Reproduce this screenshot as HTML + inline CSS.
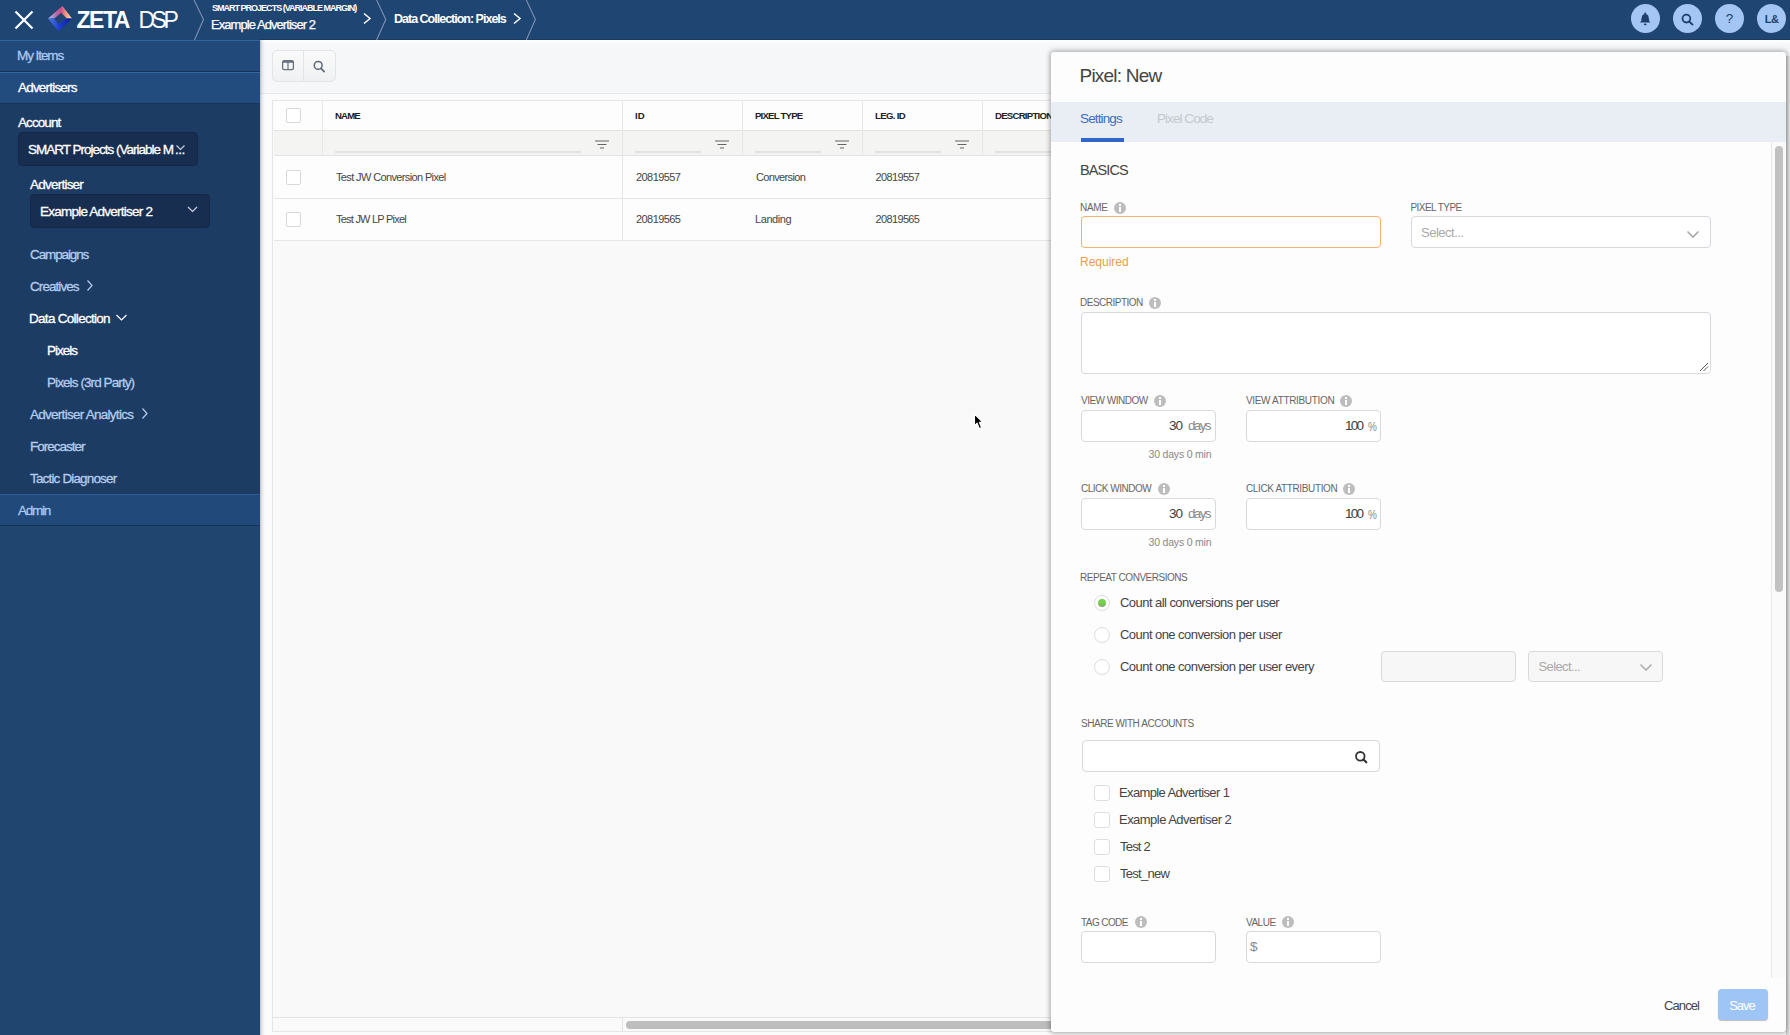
<!DOCTYPE html>
<html><head><meta charset="utf-8">
<style>
*{box-sizing:border-box;margin:0;padding:0}
html,body{width:1790px;height:1035px;overflow:hidden}
body{position:relative;font-family:"Liberation Sans",sans-serif;background:#f7f7f6;color:#444}
.a{position:absolute;white-space:nowrap}
/* header */
#hdr{left:0;top:0;width:1790px;height:40px;background:#1f4572}
.hbtn{position:absolute;top:4px;width:29px;height:29px;border-radius:50%;background:#a4c6f4}
/* sidebar */
#side{left:0;top:40px;width:260px;height:995px;background:#1f436e}
.sit{position:absolute;font-size:13.5px;color:#b3ccee;line-height:16px;-webkit-text-stroke:0.3px currentColor}
/* content */
#content{left:260px;top:40px;width:1530px;height:995px;background:#f7f7f6}
.lbl{position:absolute;font-size:10px;color:#666;line-height:12px;letter-spacing:0px}
.inp{position:absolute;border:1px solid #d6d9de;border-radius:4px;background:#fff}
.info{position:absolute;width:12px;height:12px;border-radius:50%;background:#bdbdbd}
.info:after{content:"";position:absolute;left:5px;top:5px;width:2px;height:5px;background:#fff}
.info:before{content:"";position:absolute;left:5px;top:2px;width:2px;height:2px;background:#fff}
.thd{font-size:9.6px;line-height:12px;font-weight:bold;color:#222}
.td{font-size:11px;line-height:14px;color:#454545}
.ph{font-size:13px;line-height:16px;color:#a9a9a9}
.num{font-size:13.5px;line-height:16px;color:#3d3d3d}
.unit{font-size:13.5px;line-height:16px;color:#888}
.sub{font-size:10.5px;line-height:13px;color:#888}
.rt{font-size:13px;line-height:16px;color:#444}
.radio{position:absolute;width:16px;height:16px;border:1px solid #ddd;border-radius:50%;background:#fff}
.cb{position:absolute;width:16px;height:16px;border:1px solid #ddd;border-radius:3px;background:#fff}
</style></head><body>

<div id="hdr" class="a">
 <div class="a" style="left:260px;top:39px;width:1530px;height:1px;background:#1c3b62"></div>
 <svg class="a" style="left:0;top:0" width="1790" height="40">
  <path d="M15.5 11.5 L32.5 28.5 M32.5 11.5 L15.5 28.5" stroke="#fff" stroke-width="2.2" fill="none"/>
  <defs>
   <linearGradient id="lg1" x1="0" y1="0" x2="1" y2="0"><stop offset="0" stop-color="#a9c3ee"/><stop offset=".35" stop-color="#b86aa8"/><stop offset=".55" stop-color="#cf4f86"/><stop offset=".75" stop-color="#ee9a84"/><stop offset="1" stop-color="#fbeaa0"/></linearGradient>
   <linearGradient id="lg2" x1="0" y1="0" x2="1" y2="0"><stop offset="0" stop-color="#4a7fe8"/><stop offset=".5" stop-color="#1a3bd0"/><stop offset="1" stop-color="#0a16a0"/></linearGradient>
  </defs>
  <path d="M48 18.6 L62.4 6 L72 18.6 L66.8 18.6 L61.1 12.8 L54.3 18.6 Z" fill="url(#lg1)"/>
  <path d="M48 18.6 L54.3 18.6 L58.6 24.6 L66.8 18.6 L72 18.6 L58.4 31 Z" fill="url(#lg2)"/>
  <path d="M194 0 L203.5 19.5 L194.5 40" stroke="#7d92b4" stroke-width="1.1" fill="none"/>
  <path d="M376.6 0 L385.8 19.5 L376.6 40" stroke="#7d92b4" stroke-width="1.1" fill="none"/>
  <path d="M526.3 0 L535.4 19.5 L526.3 40" stroke="#7d92b4" stroke-width="1.1" fill="none"/>
  <path d="M364 13.5 L370 18.5 L364 23.5" stroke="#fff" stroke-width="1.5" fill="none"/>
  <path d="M514 13.5 L520 18.5 L514 23.5" stroke="#fff" stroke-width="1.5" fill="none"/>
 </svg>
 <div class="a" id="t_zeta" style="left:76.5px;top:7px;font-size:23px;line-height:26px;font-weight:bold;color:#fff;letter-spacing:-1.5px">ZETA</div>
 <div class="a" id="t_dsp" style="left:138.5px;top:7px;font-size:23px;line-height:26px;color:#fff;letter-spacing:-3.5px">DSP</div>
 <div class="a" id="t_smart" style="left:212px;top:3px;font-size:9px;line-height:11px;color:#fff;font-weight:bold;letter-spacing:-0.99px">SMART PROJECTS (VARIABLE MARGIN)</div>
 <div class="a" id="t_exadv" style="left:211px;top:17px;font-size:13px;line-height:16px;color:#fff;-webkit-text-stroke:0.25px #fff;letter-spacing:-0.94px">Example Advertiser 2</div>
 <div class="a" id="t_dcp" style="left:394px;top:11px;font-size:12.5px;line-height:16px;color:#fff;font-weight:bold;letter-spacing:-1px">Data Collection: Pixels</div>
 <div class="hbtn" style="left:1631px"><svg width="29" height="29" style="position:absolute;left:0;top:0"><path d="M9 18.6 L19.4 18.6 L18.2 17 L17.6 13 C17.3 11 16 10 14.2 10 C12.4 10 11.1 11 10.8 13 L10.2 17 Z" fill="#1e3f6a"/><circle cx="14.2" cy="9.6" r="1" fill="#1e3f6a"/><ellipse cx="14.2" cy="20.3" rx="1.4" ry="0.9" fill="#1e3f6a"/></svg></div>
 <div class="hbtn" style="left:1673px"><svg width="29" height="29" style="position:absolute;left:0;top:0"><circle cx="13.4" cy="14.6" r="3.9" stroke="#1e3f6a" stroke-width="1.8" fill="none"/><path d="M16.2 17.5 L19.5 20.6" stroke="#1e3f6a" stroke-width="1.9" stroke-linecap="round"/></svg></div>
 <div class="hbtn" style="left:1715px"><div class="a" style="left:0;top:7px;width:29px;text-align:center;font-size:13.5px;line-height:16px;color:#1e3f6a">?</div></div>
 <div class="hbtn" style="left:1757px"><div class="a" style="left:0;top:8px;width:29px;text-align:center;font-size:11px;line-height:14px;color:#1e3f6a;font-weight:bold;letter-spacing:-0.5px">L&amp;</div></div>
</div>
<div id="side" class="a">
 <div class="a" style="left:0;top:0;width:260px;height:995px;background:#20456f"></div>
 <div class="a" style="left:0;top:63px;width:260px;height:391px;background:#1d3c63"></div>
 <div class="a" style="left:0;top:0;width:260px;height:31px;background:#21497a;border-top:1px solid #3465a0"></div>
 <div class="a" style="left:0;top:31px;width:260px;height:1px;background:#15325a"></div>
 <div class="a" style="left:0;top:32px;width:260px;height:32px;background:#234c7e;border-top:1px solid #3466a2;border-bottom:1px solid #17345c"></div>
 <div class="a" style="left:0;top:454px;width:260px;height:32px;background:#21497a;border-top:1px solid #2d5d98;border-bottom:1px solid #15325a"></div>
 <div class="sit" id="t_myitems" style="left:17px;top:8px;color:#a9c8f2;letter-spacing:-1.07px">My Items</div>
 <div class="sit" id="t_adv" style="left:18px;top:40px;color:#fff;letter-spacing:-0.8px">Advertisers</div>
 <div class="sit" id="t_acc" style="left:18px;top:75px;color:#fff;letter-spacing:-0.92px">Account</div>
 <div class="a" style="left:18px;top:92px;width:180px;height:34px;background:#172e50;border:1px solid #13284a;border-radius:4px"></div>
 <div class="sit" id="t_smartp" style="left:28px;top:102px;color:#fff;letter-spacing:-1px">SMART Projects (Variable M</div><div class="sit" style="left:175px;top:102px;color:#fff;letter-spacing:-0.5px">...</div>
 <div class="sit" id="t_advl" style="left:30px;top:137px;color:#fff;letter-spacing:-0.77px">Advertiser</div>
 <div class="a" style="left:30px;top:154px;width:180px;height:34px;background:#172e50;border:1px solid #13284a;border-radius:4px"></div>
 <div class="sit" id="t_exadv2" style="left:40px;top:164px;color:#fff;letter-spacing:-0.77px">Example Advertiser 2</div>
 <svg class="a" style="left:0;top:0" width="260" height="500">
  <path d="M176.5 105.5 L180.5 109.5 L184.5 105.5" stroke="#c9d3e0" stroke-width="1.1" fill="none"/>
  <path d="M188 167 L192.5 171.5 L197 167" stroke="#c9d3e0" stroke-width="1.2" fill="none"/>
  <path d="M87.5 240.5 L92 245.5 L87.5 250.5" stroke="#b3ccee" stroke-width="1.2" fill="none"/>
  <path d="M116.5 275 L121.5 280 L126.5 275" stroke="#fff" stroke-width="1.2" fill="none"/>
  <path d="M142.5 368.5 L147 373.5 L142.5 378.5" stroke="#b3ccee" stroke-width="1.2" fill="none"/>
 </svg>
 <div class="sit" id="t_camp" style="left:30px;top:207px;letter-spacing:-1.12px">Campaigns</div>
 <div class="sit" id="t_crea" style="left:30px;top:239px;letter-spacing:-0.93px">Creatives</div>
 <div class="sit" id="t_dc" style="left:29px;top:271px;color:#fff;letter-spacing:-0.71px">Data Collection</div>
 <div class="sit" id="t_pix" style="left:47px;top:303px;color:#fff;letter-spacing:-1px">Pixels</div>
 <div class="sit" id="t_pix3" style="left:47px;top:335px;letter-spacing:-0.91px">Pixels (3rd Party)</div>
 <div class="sit" id="t_aa" style="left:30px;top:367px;letter-spacing:-0.73px">Advertiser Analytics</div>
 <div class="sit" id="t_fc" style="left:30px;top:399px;letter-spacing:-1px">Forecaster</div>
 <div class="sit" id="t_td" style="left:30px;top:431px;letter-spacing:-0.84px">Tactic Diagnoser</div>
 <div class="sit" id="t_admin" style="left:18px;top:463px;color:#a9c8f2;letter-spacing:-1.25px">Admin</div>
</div>
<div id="content" class="a">
 <!-- shadow from sidebar -->
 <!-- toolbar area -->
 <div class="a" style="left:0;top:0;width:1530px;height:54px;background:#f6f7f9;border-bottom:1px solid #e6e8eb"></div>
 <div class="a" style="left:0;top:54px;width:1530px;height:941px;background:#fbfbfb"></div>
 <div class="a" style="left:0;top:0;width:1530px;height:5px;background:linear-gradient(#ffffff,#f6f7f9)"></div>
 <div class="a" style="left:0;top:0;width:5px;height:995px;background:linear-gradient(to right,rgba(0,0,0,.24),rgba(0,0,0,.08) 40%,rgba(0,0,0,0))"></div>
 <div class="a" style="left:12px;top:10px;width:64px;height:32px;border:1px solid #e2e4e8;border-radius:5px;background:linear-gradient(#fafafa,#f0f1f3)"></div>
 <div class="a" style="left:43px;top:11px;width:1px;height:30px;background:#e2e4e8"></div>
 <svg class="a" style="left:12px;top:10px" width="64" height="32">
  <rect x="10.6" y="10.6" width="10.8" height="9" rx="1.6" fill="none" stroke="#69717e" stroke-width="1.3"/>
  <path d="M10.6 11.9 L21.4 11.9" stroke="#69717e" stroke-width="1.8"/>
  <path d="M16 11 L16 19.5" stroke="#69717e" stroke-width="1.2"/>
  <circle cx="46.2" cy="15.4" r="3.9" fill="none" stroke="#5f6774" stroke-width="1.5"/>
  <path d="M49 18.4 L52.2 21.6" stroke="#5f6774" stroke-width="1.6" stroke-linecap="round"/>
 </svg>
 <!-- table -->
 <div class="a" style="left:12px;top:60px;width:1518px;height:932px;background:#f9f9f9;border:1px solid #e6e6e6;border-right:none"></div>
 <div class="a" style="left:14px;top:61px;width:1516px;height:30px;background:#fdfdfd;border-bottom:1px solid #e3e3e3"></div>
 <div class="a" style="left:14px;top:91px;width:1516px;height:25px;background:#f4f4f3;border-bottom:1px solid #e3e3e3"></div>
 <div class="a" style="left:14px;top:116px;width:1516px;height:43px;background:#fdfdfd;border-bottom:1px solid #e6e6e6"></div>
 <div class="a" style="left:14px;top:159px;width:1516px;height:42px;background:#fdfdfd;border-bottom:1px solid #e6e6e6"></div>
 <!-- column dividers -->
 <div class="a" style="left:62px;top:61px;width:1px;height:55px;background:#e6e6e6"></div>
 <div class="a" style="left:362px;top:61px;width:1px;height:140px;background:#e6e6e6"></div>
 <div class="a" style="left:482px;top:61px;width:1px;height:55px;background:#e6e6e6"></div>
 <div class="a" style="left:602px;top:61px;width:1px;height:55px;background:#e6e6e6"></div>
 <div class="a" style="left:722px;top:61px;width:1px;height:55px;background:#e6e6e6"></div>
 <!-- checkboxes -->
 <div class="a" style="left:26px;top:68px;width:15px;height:15px;border:1px solid #d8d8d8;border-radius:2px;background:#fff"></div>
 <div class="a" style="left:26px;top:130px;width:15px;height:15px;border:1px solid #d8d8d8;border-radius:2px;background:#fff"></div>
 <div class="a" style="left:26px;top:172px;width:15px;height:15px;border:1px solid #d8d8d8;border-radius:2px;background:#fff"></div>
 <!-- header text -->
 <div class="a thd" id="t_hname" style="left:75px;top:70px;letter-spacing:-0.83px">NAME</div>
 <div class="a thd" id="t_hid" style="left:375px;top:70px;letter-spacing:-0px">ID</div>
 <div class="a thd" id="t_hpt" style="left:495px;top:70px;letter-spacing:-0.78px">PIXEL TYPE</div>
 <div class="a thd" id="t_hleg" style="left:615px;top:70px;letter-spacing:-0.67px">LEG. ID</div>
 <div class="a thd" id="t_hdesc" style="left:735px;top:70px;letter-spacing:-0.75px">DESCRIPTION</div>
 <!-- filter underline + icons -->
 <div class="a" style="left:75px;top:111px;width:246px;height:2px;background:#e2e2e2"></div>
 <div class="a" style="left:375px;top:111px;width:66px;height:2px;background:#e2e2e2"></div>
 <div class="a" style="left:495px;top:111px;width:66px;height:2px;background:#e2e2e2"></div>
 <div class="a" style="left:615px;top:111px;width:66px;height:2px;background:#e2e2e2"></div>
 <div class="a" style="left:735px;top:111px;width:66px;height:2px;background:#e2e2e2"></div>
 <svg class="a" style="left:0;top:90px" width="1000" height="26">
  <g stroke="#666" stroke-width="1.2">
   <path d="M335 11 H349 M337.5 14.5 H346.5 M340 18 H344"/>
   <path d="M455 11 H469 M457.5 14.5 H466.5 M460 18 H464"/>
   <path d="M575 11 H589 M577.5 14.5 H586.5 M580 18 H584"/>
   <path d="M695 11 H709 M697.5 14.5 H706.5 M700 18 H704"/>
  </g>
 </svg>
 <!-- row text -->
 <div class="a td" id="t_r1n" style="left:76px;top:130px;letter-spacing:-0.63px">Test JW Conversion Pixel</div>
 <div class="a td" id="t_r1i" style="left:376px;top:130px;letter-spacing:-0.57px">20819557</div>
 <div class="a td" id="t_r1t" style="left:496px;top:130px;letter-spacing:-0.65px">Conversion</div>
 <div class="a td" id="t_r1l" style="left:615.5px;top:130px;letter-spacing:-0.64px">20819557</div>
 <div class="a td" id="t_r2n" style="left:76px;top:172px;letter-spacing:-0.77px">Test JW LP Pixel</div>
 <div class="a td" id="t_r2i" style="left:376px;top:172px;letter-spacing:-0.57px">20819565</div>
 <div class="a td" id="t_r2t" style="left:495px;top:172px;letter-spacing:-0.42px">Landing</div>
 <div class="a td" id="t_r2l" style="left:615.5px;top:172px;letter-spacing:-0.64px">20819565</div>
 <!-- bottom scroll row -->
 <div class="a" style="left:13px;top:977px;width:1517px;height:14px;background:#fafafa;border-top:1px solid #e3e3e3"></div>
 <div class="a" style="left:362px;top:978px;width:1px;height:13px;background:#e3e3e3"></div>
 <div class="a" style="left:366px;top:981px;width:1000px;height:8px;background:#bdbdbd;border-radius:4px"></div>
 <!-- cursor -->
 <svg class="a" style="left:710px;top:370px" width="20" height="22">
  <path d="M4.5 4 L4.5 15.6 L7.1 13.2 L9.4 18.6 L11.6 17.7 L9.4 12.4 L12.9 12.4 Z" fill="#000" stroke="#fff" stroke-width="1.1" stroke-linejoin="round"/>
 </svg>
</div>
<div class="a" style="left:1786px;top:56px;width:4px;height:979px;background:linear-gradient(to right,#cbcbcb,#e0e0e0 60%,#e8e8e8)"></div>
<div id="panel" class="a" style="left:1051px;top:52px;width:735px;height:980px;background:#fdfdfd;border-radius:3px;box-shadow:0 0 5px 1px rgba(0,0,0,.35)">
 <div class="a" id="t_title" style="left:28.5px;top:13px;font-size:19px;line-height:22px;color:#444;letter-spacing:-0.78px">Pixel: New</div>
 <div class="a" style="left:0;top:50px;width:735px;height:40px;background:#e8eef4"></div>
 <div class="a" id="t_settings" style="left:29px;top:59px;font-size:13.5px;line-height:16px;color:#3a6fc5;letter-spacing:-0.86px">Settings</div>
 <div class="a" id="t_pcode" style="left:106px;top:59px;font-size:13.5px;line-height:16px;color:#c4c9cf;letter-spacing:-0.94px">Pixel Code</div>
 <div class="a" style="left:30px;top:86px;width:43px;height:4px;background:#2f66c8"></div>
 <!-- scroll track -->
 <div class="a" style="left:720px;top:90px;width:15px;height:836px;background:#fafafa;border-left:1px solid #e8e8e8"></div>
 <div class="a" style="left:724px;top:94px;width:8px;height:446px;background:#c1c1c1;border-radius:4px"></div>

 <div class="a" id="t_basics" style="left:29px;top:110px;font-size:14.5px;line-height:17px;color:#444;letter-spacing:-0.9px">BASICS</div>

 <div class="lbl" id="t_lname" style="left:29px;top:150px;letter-spacing:-0.33px">NAME</div>
 <div class="info" style="left:63px;top:150px"></div>
 <div class="inp" style="left:30px;top:164px;width:300px;height:32px;border-color:#efb468"></div>
 <div class="a" id="t_req" style="left:29px;top:203px;font-size:12px;line-height:15px;color:#e89d48;letter-spacing:0px">Required</div>

 <div class="lbl" id="t_lpt" style="left:359.5px;top:150px;letter-spacing:-0.55px">PIXEL TYPE</div>
 <div class="inp" style="left:360px;top:164px;width:300px;height:32px"></div>
 <div class="a ph" id="t_sel1" style="left:370px;top:173px;letter-spacing:-0.5px">Select...</div>
 <svg class="a" style="left:630px;top:174px" width="20" height="16"><path d="M6.5 5.5 L12 11 L17.5 5.5" stroke="#a8a8a8" stroke-width="1.6" fill="none"/></svg>

 <div class="lbl" id="t_ldesc" style="left:29px;top:245px;letter-spacing:-0.5px">DESCRIPTION</div>
 <div class="info" style="left:98px;top:245px"></div>
 <div class="inp" style="left:30px;top:260px;width:630px;height:62px"></div>
 <svg class="a" style="left:648px;top:310px" width="10" height="10"><path d="M1 9 L9 1 M4.5 9 L9 4.5" stroke="#555" stroke-width="1"/></svg>

 <div class="lbl" id="t_lvw" style="left:30px;top:343px;letter-spacing:-0.5px">VIEW WINDOW</div>
 <div class="info" style="left:103px;top:343px"></div>
 <div class="inp" style="left:30px;top:358px;width:135px;height:32px"></div>
 <div class="a num" id="t_vw30" style="left:118px;top:366px;letter-spacing:-1px">30</div>
 <div class="a unit" id="t_vwd" style="left:137px;top:366px;letter-spacing:-1.66px">days</div>
 <div class="a sub" id="t_vwsub" style="left:97.5px;top:396px;letter-spacing:-0.19px">30 days 0 min</div>

 <div class="lbl" id="t_lva" style="left:195px;top:343px;letter-spacing:-0.34px">VIEW ATTRIBUTION</div>
 <div class="info" style="left:289px;top:343px"></div>
 <div class="inp" style="left:195px;top:358px;width:135px;height:32px"></div>
 <div class="a num" id="t_va100" style="left:294px;top:366px;letter-spacing:-1.75px">100</div>
 <div class="a unit" id="t_vap" style="left:317px;top:366.5px;font-size:12.5px;transform:scaleX(.8);transform-origin:0 0">%</div>

 <div class="lbl" id="t_lcw" style="left:30px;top:431px;letter-spacing:-0.5px">CLICK WINDOW</div>
 <div class="info" style="left:107px;top:431px"></div>
 <div class="inp" style="left:30px;top:446px;width:135px;height:32px"></div>
 <div class="a num" id="t_cw30" style="left:118px;top:454px;letter-spacing:-1px">30</div>
 <div class="a unit" id="t_cwd" style="left:137px;top:454px;letter-spacing:-1.66px">days</div>
 <div class="a sub" id="t_cwsub" style="left:97.5px;top:484px;letter-spacing:-0.19px">30 days 0 min</div>

 <div class="lbl" id="t_lca" style="left:195px;top:431px;letter-spacing:-0.37px">CLICK ATTRIBUTION</div>
 <div class="info" style="left:292px;top:431px"></div>
 <div class="inp" style="left:195px;top:446px;width:135px;height:32px"></div>
 <div class="a num" id="t_ca100" style="left:294px;top:454px;letter-spacing:-1.75px">100</div>
 <div class="a unit" id="t_cap" style="left:317px;top:454.5px;font-size:12.5px;transform:scaleX(.8);transform-origin:0 0">%</div>

 <div class="lbl" id="t_lrep" style="left:29px;top:520px;letter-spacing:-0.47px">REPEAT CONVERSIONS</div>
 <div class="radio" style="left:43px;top:543px"><div style="position:absolute;left:3px;top:3px;width:8px;height:8px;border-radius:50%;background:linear-gradient(#72d24c 45%,#8aa66a)"></div></div>
 <div class="a rt" id="t_rad1" style="left:69px;top:543px;letter-spacing:-0.55px">Count all conversions per user</div>
 <div class="radio" style="left:43px;top:575px"></div>
 <div class="a rt" id="t_rad2" style="left:69px;top:575px;letter-spacing:-0.55px">Count one conversion per user</div>
 <div class="radio" style="left:43px;top:607px"></div>
 <div class="a rt" id="t_rad3" style="left:69px;top:607px;letter-spacing:-0.55px">Count one conversion per user every</div>
 <div class="inp" style="left:330px;top:599px;width:135px;height:31px;background:#f7f7f7"></div>
 <div class="inp" style="left:477px;top:599px;width:135px;height:31px;background:#f7f7f7"></div>
 <div class="a ph" id="t_sel2" style="left:487.5px;top:607px;letter-spacing:-0.62px">Select...</div>
 <svg class="a" style="left:583px;top:607px" width="20" height="16"><path d="M6.5 5.5 L12 11 L17.5 5.5" stroke="#b0b0b0" stroke-width="1.6" fill="none"/></svg>

 <div class="lbl" id="t_lshare" style="left:30px;top:666px;letter-spacing:-0.44px">SHARE WITH ACCOUNTS</div>
 <div class="inp" style="left:31px;top:688px;width:298px;height:32px"></div>
 <svg class="a" style="left:300px;top:696px" width="20" height="18"><circle cx="9.3" cy="8.3" r="4.3" fill="none" stroke="#333" stroke-width="1.8"/><path d="M12.5 11.5 L15.3 14.3" stroke="#333" stroke-width="2.2" stroke-linecap="round"/></svg>

 <div class="cb" style="left:43px;top:733px"></div>
 <div class="a rt" id="t_cb1" style="left:68px;top:733px;letter-spacing:-0.63px">Example Advertiser 1</div>
 <div class="cb" style="left:43px;top:760px"></div>
 <div class="a rt" id="t_cb2" style="left:68px;top:760px;letter-spacing:-0.53px">Example Advertiser 2</div>
 <div class="cb" style="left:43px;top:787px"></div>
 <div class="a rt" id="t_cb3" style="left:69px;top:787px;letter-spacing:-0.8px">Test 2</div>
 <div class="cb" style="left:43px;top:814px"></div>
 <div class="a rt" id="t_cb4" style="left:69px;top:814px;letter-spacing:-0.71px">Test_new</div>

 <div class="lbl" id="t_ltag" style="left:30px;top:865px;letter-spacing:-0.58px">TAG CODE</div>
 <div class="info" style="left:84px;top:864px"></div>
 <div class="inp" style="left:30px;top:879px;width:135px;height:32px"></div>
 <div class="lbl" id="t_lval" style="left:195px;top:865px;letter-spacing:-0.5px">VALUE</div>
 <div class="info" style="left:231px;top:864px"></div>
 <div class="inp" style="left:195px;top:879px;width:135px;height:32px"></div>
 <div class="a unit" id="t_dollar" style="left:199px;top:887px">$</div>

 <div class="a" id="t_cancel" style="left:613px;top:946px;font-size:13px;line-height:16px;color:#444;letter-spacing:-0.9px">Cancel</div>
 <div class="a" style="left:667px;top:937px;width:50px;height:31px;background:#9ec5f6;border-radius:4px;box-shadow:0 1px 1px rgba(0,0,0,.25)"></div>
 <div class="a" id="t_save" style="left:666px;top:946px;width:50px;text-align:center;font-size:13px;line-height:16px;color:#fff;letter-spacing:-1px">Save</div>
</div>

</body></html>
